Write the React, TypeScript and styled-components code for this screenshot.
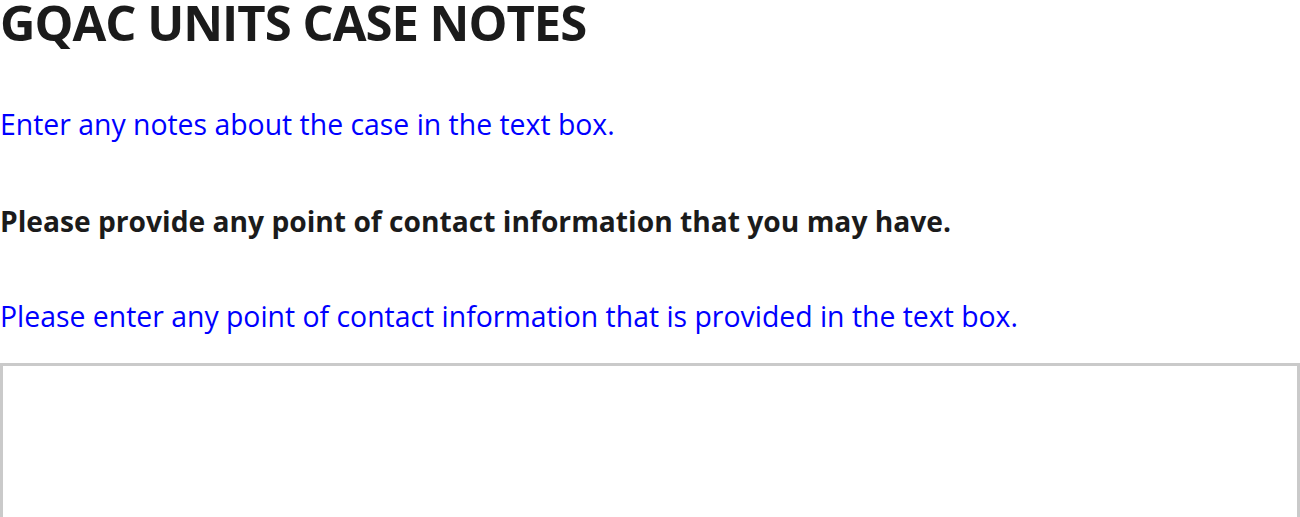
import React from "react";
import styled, { createGlobalStyle } from "styled-components";

const GlobalStyle = createGlobalStyle`
  html, body {
    margin: 0;
    background: #ffffff;
  }
  body {
    font-family: "Open Sans", "Noto Sans", sans-serif;
    color: #1b1b1b;
  }
`;

const Page = styled.main`
  display: flex;
  flex-direction: column;
  width: 1300px;
`;

const Title = styled.h1`
  margin: 0;
  font-size: 49px;
  line-height: 45px;
  font-weight: 700;
  letter-spacing: -1px;
  color: #1b1b1b;
`;

const Text = styled.p<{ $tone?: "hint" | "label"; $gap: number }>`
  margin: ${({ $gap }) => $gap}px 0 0;
  font-size: ${({ $tone }) => ($tone === "label" ? "28.2px" : "28.4px")};
  line-height: 34px;
  font-weight: ${({ $tone }) => ($tone === "label" ? 700 : 400)};
  color: ${({ $tone }) => ($tone === "label" ? "#1b1b1b" : "#0000ff")};
`;

const NotesBox = styled.textarea`
  box-sizing: border-box;
  display: block;
  width: 100%;
  height: 220px;
  margin-top: 30px;
  border: 3px solid #cacaca;
  border-radius: 0;
  padding: 8px;
  font-family: "Open Sans", sans-serif;
  font-size: 20px;
  resize: none;
  outline: none;
`;

export default function App() {
  return (
    <>
      <GlobalStyle />
      <Page>
        <Title>GQAC UNITS CASE NOTES</Title>
        <Text $tone="hint" $gap={62}>
          Enter any notes about the case in the text box.
        </Text>
        <Text $tone="label" $gap={63}>
          Please provide any point of contact information that you may have.
        </Text>
        <Text $tone="hint" $gap={61}>
          Please enter any point of contact information that is provided in the text box.
        </Text>
        <NotesBox aria-label="Point of contact information" />
      </Page>
    </>
  );
}
